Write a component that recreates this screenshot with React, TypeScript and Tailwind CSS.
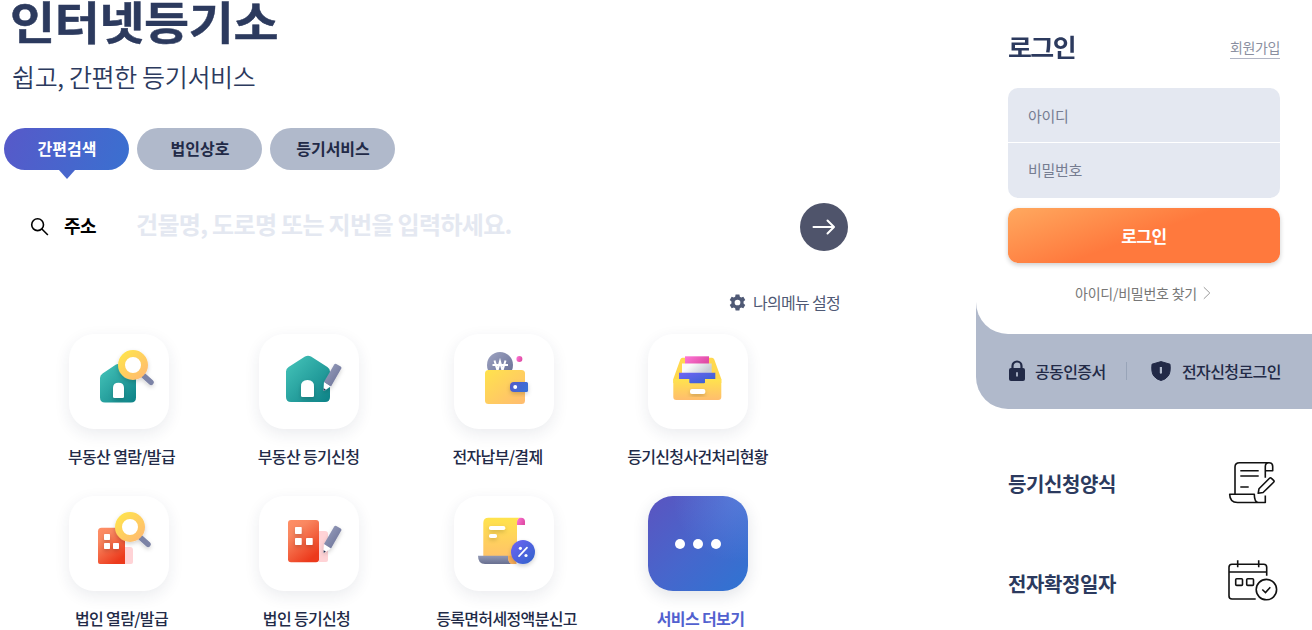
import React from 'react';

const Defs = () => (
  <svg className="absolute h-0 w-0" aria-hidden="true">
    <defs>
      <linearGradient id="teal" x1="0" y1="0" x2="1" y2="1"><stop offset="0" stopColor="#47c6bb" /><stop offset="1" stopColor="#0c8186" /></linearGradient>
      <linearGradient id="gold" x1="0" y1="0" x2="0.9" y2="1"><stop offset="0" stopColor="#ffe34d" /><stop offset="1" stopColor="#ffbd6e" /></linearGradient>
      <linearGradient id="goldV" x1="0" y1="0" x2="0" y2="1"><stop offset="0" stopColor="#ffe34d" /><stop offset="1" stopColor="#ffbd6e" /></linearGradient>
      <linearGradient id="slate" x1="0" y1="0" x2="1" y2="1"><stop offset="0" stopColor="#9ea4c2" /><stop offset="1" stopColor="#656c92" /></linearGradient>
      <linearGradient id="slateV" x1="0" y1="0" x2="0" y2="1"><stop offset="0" stopColor="#9299b5" /><stop offset="1" stopColor="#686f90" /></linearGradient>
      <linearGradient id="red" x1="0" y1="0" x2="0.6" y2="1"><stop offset="0" stopColor="#ff8f66" /><stop offset="0.3" stopColor="#f98760" /><stop offset="1" stopColor="#ec3a1c" /></linearGradient>
      <linearGradient id="blue" x1="0" y1="0" x2="1" y2="1"><stop offset="0" stopColor="#7065f5" /><stop offset="1" stopColor="#2f62c9" /></linearGradient>
      <linearGradient id="indigo" x1="0" y1="0" x2="1" y2="0.4"><stop offset="0" stopColor="#5658c8" /><stop offset="1" stopColor="#3a6fd6" /></linearGradient>
      <linearGradient id="pink" x1="0" y1="0" x2="1" y2="0.4"><stop offset="0" stopColor="#ff78d8" /><stop offset="1" stopColor="#e04ca5" /></linearGradient>
      <linearGradient id="paper" x1="0" y1="0" x2="1" y2="0.4"><stop offset="0.3" stopColor="#fafafa" /><stop offset="1" stopColor="#c9ced6" /></linearGradient>
      <filter id="soft" x="-50%" y="-50%" width="200%" height="200%"><feDropShadow dx="0" dy="2" stdDeviation="2" floodColor="#000" floodOpacity="0.18" /></filter>
    </defs>
  </svg>
);

const Art = ({ children }: { children: React.ReactNode }) => (
  <svg viewBox="0 0 100 95" className="block h-[95px] w-[100px]">{children}</svg>
);

const Magnifier = ({ x, y }: { x: number; y: number }) => (
  <g transform={`translate(${x} ${y})`} filter="url(#soft)">
    <path d="M11 11L18 17.3" stroke="#7c83a6" strokeWidth="5.500" strokeLinecap="round" />
    <circle r="11.5" fill="#fff" />
    <circle r="11.5" fill="none" stroke="url(#gold)" strokeWidth="7" />
  </g>
);

const Pencil = () => (
  <g filter="url(#soft)">
    <path d="M65 47.8l6.8 4.4-5.3 3.7-2 1z" fill="#fff" />
    <path d="M64.6 54.3l2.3 1.2-2.2 1.5z" fill="#242c4c" />
    <path d="M75.2 30.4q.9-1 2.1-.4l4.4 2.6q1.2.8.6 2L72 52.4l-7-4.4z" fill="url(#slate)" />
  </g>
);

const HouseSearch = () => (
  <Art>
    <path d="M31 44q0-3 2.6-4.6l13-8.6q2.4-1.6 4.8 0l13 8.6Q67 41 67 44v19.5q0 5-5 5H36q-5 0-5-5z" fill="url(#teal)" />
    <path d="M44 54q0-5.3 5.5-5.3T55 54v8.5q0 1.5-1.500 1.500h-8q-1.500 0-1.500-1.500z" fill="#fff" filter="url(#soft)" />
    <Magnifier x={64} y={31} />
  </Art>
);
const HousePencil = () => (
  <Art>
    <path d="M27 37.500q0-3 2.600-4.600L46 22.500q3-1.600 6 0l16.400 10.400Q71 34.500 71 37.500V63q0 5-5 5H32q-5 0-5-5z" fill="url(#teal)" />
    <path d="M42 52.500q0-6.500 6.500-6.500t6.500 6.500v9q0 1.500-1.500 1.500h-10q-1.500 0-1.500-1.500z" fill="#fff" filter="url(#soft)" />
    <Pencil />
  </Art>
);
const Wallet = () => (
  <Art>
    <circle cx="46" cy="31" r="13" fill="url(#slate)" />
    <path d="M40.500 26.500l3 10 2.500-9 2.500 9 3-10M38.500 31h15.500" fill="none" stroke="#fff" strokeWidth="2" />
    <rect x="31" y="36" width="40" height="34" rx="3.500" fill="url(#gold)" />
    <circle cx="65.400" cy="24.900" r="3" fill="url(#pink)" />
    <path d="M60 48h12.500q1.500 0 1.500 1.500v7q0 1.500-1.500 1.500H60q-4 0-4-4v-2q0-4 4-4z" fill="url(#indigo)" filter="url(#soft)" />
    <circle cx="61.200" cy="53" r="2" fill="#fff" />
  </Art>
);
const Drawer = () => (
  <Art>
    <path d="M34.500 23.700h29.500q1.600 0 2.300 1.800L73.300 45v4h-48v-4l7-19.500q.7-1.800 2.200-1.800z" fill="#ffd84f" />
    <path d="M37 22.300h24v8H37z" fill="url(#pink)" />
    <path d="M34 29.500h29.700V39H34z" fill="url(#paper)" />
    <path d="M31 38.700h36.300V51H31z" fill="url(#blue)" />
    <path d="M25.300 45h16v3.300q0 1 1 1H56q1 0 1-1V45h16.300v18q0 3-3 3h-42q-3 0-3-3z" fill="url(#goldV)" />
    <rect x="42" y="55" width="15.300" height="5" rx="2" fill="#fff" filter="url(#soft)" />
  </Art>
);
const OfficeSearch = () => (
  <Art>
    <path d="M56 51h5q3 0 3 3v12q0 2-2 2h-6z" fill="#ffd3d6" />
    <path d="M32.500 31.700H52q4 0 4 4V68H31q-2 0-2-2V35.200q0-3.500 3.500-3.500z" fill="url(#red)" />
    <g fill="#fff" filter="url(#soft)"><rect x="35" y="38" width="6" height="6" rx=".7" /><rect x="35" y="47" width="6" height="6" rx=".7" /><rect x="44" y="47" width="6" height="6" rx=".7" /></g>
    <Magnifier x={61} y={31} />
  </Art>
);
const OfficePencil = () => (
  <Art>
    <path d="M60 35h6q3 0 3 3v26q0 2-2 2h-7z" fill="#ffd3d6" />
    <rect x="29" y="24" width="31" height="42.200" rx="3" fill="url(#red)" />
    <g fill="#fff" filter="url(#soft)"><rect x="36" y="31" width="6.700" height="7" rx=".7" /><rect x="36" y="42" width="6.700" height="7" rx=".7" /><rect x="47" y="42" width="6.700" height="7" rx=".7" /></g>
    <Pencil />
  </Art>
);
const TaxScroll = () => (
  <Art>
    <path d="M63 29v-3.500q0-3.800 4-3.800t4 3.800V29z" fill="url(#pink)" />
    <path d="M34.500 21.700H67q-4 0-4 4.500V62q0 6-4 6t-5-6v-2H29.300V27q0-5.300 5.200-5.300z" fill="url(#goldV)" />
    <path d="M24 59.700h30q0 8.300 5 8.300H31q-7 0-7-8.300z" fill="url(#slateV)" />
    <path d="M54 59.700h8.500V68H58q-4 0-4-8.300z" fill="#f6ab58" />
    <g fill="#fff" filter="url(#soft)"><rect x="35" y="30" width="16.300" height="4" rx="1.800" /><rect x="35" y="38" width="8" height="4" rx="1.800" /></g>
    <circle cx="69" cy="56" r="12" fill="url(#blue)" filter="url(#soft)" />
    <path d="M65 60.200l8-8.500" stroke="#fff" strokeWidth="1.700" strokeLinecap="round" />
    <circle cx="66.400" cy="52.300" r="1.600" fill="#fff" /><circle cx="72" cy="59.500" r="1.600" fill="#fff" />
  </Art>
);
const MoreDots = () => (
  <Art><g fill="#fff"><circle cx="32" cy="48" r="5" /><circle cx="50" cy="48" r="5" /><circle cx="68" cy="48" r="5" /></g></Art>
);

const rows = [
  [
    { label: '부동산 열람/발급', icon: <HouseSearch />, col: 'w-[190px]', shift: 'pl-[5px]' },
    { label: '부동산 등기신청', icon: <HousePencil />, col: 'w-[190px]', shift: 'pr-px' },
    { label: '전자납부/결제', icon: <Wallet />, col: 'w-[200px]', shift: 'pr-[13px]' },
    { label: '등기신청사건처리현황', icon: <Drawer />, col: 'w-[188px]', shift: 'pr-px' },
  ],
  [
    { label: '법인 열람/발급', icon: <OfficeSearch />, col: 'w-[190px]', shift: 'pl-[5px]' },
    { label: '법인 등기신청', icon: <OfficePencil />, col: 'w-[190px]', shift: 'pr-[5px]' },
    { label: '등록면허세정액분신고', icon: <TaxScroll />, col: 'w-[200px]', shift: 'pl-[5px]' },
    { label: '서비스 더보기', icon: <MoreDots />, col: 'w-[188px]', shift: 'pl-[5px]', more: true },
  ],
];

const Gear = () => (
  <svg viewBox="0 0 16 16" className="h-[17px] w-[17px]" fill="#4f5975">
    <path fillRule="evenodd" d="M6.200.5h3.600l.4 2.100 1.300.8 2-.8 1.800 3.100-1.600 1.400v1.800l1.600 1.400-1.800 3.100-2-.8-1.300.8-.4 2.100H6.200l-.4-2.100-1.300-.8-2 .8L.7 10.300l1.600-1.400V7.100L.7 5.700l1.800-3.100 2 .8 1.300-.8zM8 5.300a2.700 2.700 0 1 0 0 5.400 2.700 2.700 0 0 0 0-5.400z" />
  </svg>
);

const ScrollLine = () => (
  <svg viewBox="0 0 56 50" className="h-[50px] w-14" fill="none" stroke="#111" strokeWidth="1.600" strokeLinejoin="round">
    <path d="M10 36V9q0-4.300 4.500-4.300H44M40.300 19.700V8.500q0-3.800 3.700-3.800t3.700 3.800v4.200h-7.400M15.300 12.700h18.400M15.300 18h18.400M15.300 29h8.400" />
    <path d="M4.700 36.300h24.600q0 8.200 4.200 8.200H12.500q-7.800 0-7.800-8.200zM33 44.500h7.300v-7" />
    <path d="M33.200 35.300l.8-4.600 10.500-10.400q1-1 2 0l2.100 2q1 1 0 2L38.100 34.500z" />
  </svg>
);
const CalendarLine = () => (
  <svg viewBox="0 0 56 50" className="h-[50px] w-14" fill="none" stroke="#111" strokeWidth="1.600">
    <path d="M30.700 43H7q-3 0-3-3V11.300q0-3 3-3h31.700q3 0 3 3v8.400M4 16h37.700M12.700 4.300v7M33.700 4.300v7" />
    <rect x="10.700" y="22.800" width="6.800" height="6.600" rx="1" /><rect x="21.700" y="22.800" width="6.800" height="6.600" rx="1" />
    <circle cx="41.400" cy="33.600" r="10.200" /><path d="M37.300 33.500l3.200 3 4.800-5.200" />
  </svg>
);

export default function App() {
  return (
    <div className="flex h-[630px] w-[1312px] overflow-hidden bg-white font-['Noto_Sans_CJK_KR',sans-serif] text-[#222a47]">
      <Defs />
      <main className="flex w-[976px] flex-col">
        <h1 className="ml-[10px] h-[60px] origin-top scale-y-[0.92] whitespace-nowrap text-[49px] font-bold leading-[46px] tracking-[-0.400px] text-[#2c3a5e] [-webkit-text-stroke:0.5px_#2c3a5e]">인터넷등기소</h1>
        <p className="ml-3 h-8 whitespace-nowrap text-[25px] font-[350] leading-8 tracking-[-0.350px] text-[#2c3a5e]">쉽고, 간편한 등기서비스</p>
        <div className="ml-1 mt-9 flex gap-2">
          <div className="flex flex-col items-center">
            <button className="h-[42px] w-[125px] rounded-full bg-[linear-gradient(110deg,#5759c9,#3a70d0)] pb-0.5 pl-px text-base font-bold leading-10 text-white">간편검색</button>
            <svg viewBox="0 0 16 9" className="h-[9px] w-4"><path d="M0 0h16L8 9z" fill="#4866cc" /></svg>
          </div>
          <button className="h-[42px] w-[125px] rounded-full bg-[#b0b9cb] pb-0.5 pl-px text-base font-bold leading-10">법인상호</button>
          <button className="h-[42px] w-[125px] rounded-full bg-[#b0b9cb] pb-0.5 pl-px text-base font-bold leading-10">등기서비스</button>
        </div>
        <div className="ml-[30px] mt-6 flex h-12 w-[818px] items-center">
          <svg viewBox="0 0 20 20" className="h-5 w-5" fill="none" stroke="#000" strokeWidth="1.600"><circle cx="7.600" cy="7.700" r="5.900" /><path d="M11.900 12l6 6" /></svg>
          <span className="ml-[14px] w-[72px] whitespace-nowrap pb-1 text-lg font-bold leading-6 tracking-[-0.500px] text-black">주소</span>
          <span className="grow whitespace-nowrap pb-[7px] text-2xl font-bold leading-8 tracking-[-0.680px] text-[#e4e8f1]">건물명, 도로명 또는 지번을 입력하세요.</span>
          <button className="flex h-12 w-12 items-center justify-center rounded-full bg-[#4f546b]">
            <svg viewBox="0 0 24 16" className="h-4 w-6" fill="none" stroke="#fff" strokeWidth="2"><path d="M1.500 8h20M15.500 1.500L22 8l-6.500 6.500" strokeLinecap="round" strokeLinejoin="round" /></svg>
          </button>
        </div>
        <div className="mt-[39px] flex h-6 w-[840px] items-center justify-end gap-[7px] text-base leading-6 tracking-[-0.700px] text-[#4f5975]">
          <Gear /><span className="whitespace-nowrap">나의메뉴 설정</span>
        </div>
        <div className="ml-6 mt-5 flex flex-col gap-7">
          {rows.map((row, r) => (
            <div key={r} className="flex">
              {row.map((it) => (
                <div key={it.label} className={`flex flex-col items-center ${it.col}`}>
                  <div className={it.more ? 'rounded-[25px] bg-[radial-gradient(circle_at_90%_0%,rgba(110,160,240,0.35),transparent_50%),linear-gradient(135deg,#5b54c0,#4766cc_50%,#2f74d2)] shadow-[0_5px_16px_rgba(30,45,80,0.13)]' : 'rounded-[25px] bg-white shadow-[0_5px_16px_rgba(30,45,80,0.09)]'}>
                    {it.icon}
                  </div>
                  <span className={`mt-[15px] whitespace-nowrap text-base leading-6 tracking-[-0.650px] ${it.shift} ${it.more ? 'font-bold text-[#5261cf]' : 'font-medium'}`}>{it.label}</span>
                </div>
              ))}
            </div>
          ))}
        </div>
      </main>
      <aside className="flex w-[336px] flex-col">
        <div className="h-[409px] rounded-bl-[32px] bg-[#b0b9cb]">
          <div className="flex h-[334px] flex-col rounded-bl-[32px] bg-white pl-8 pr-8 pt-[28px]">
            <div className="flex h-10 items-center justify-between">
              <h2 className="scale-y-[0.94] pb-0.5 text-[26px] font-bold leading-[38px] tracking-[-1.600px] text-[#2c3a5e]">로그인</h2>
              <a className="h-[21px] border-b border-[#b1b5c4] text-sm leading-[18px] tracking-[-0.400px] text-[#8a8fa0]">회원가입</a>
            </div>
            <div className="mt-5 flex h-[110px] shrink-0 flex-col overflow-hidden rounded-[10px] bg-[#e4e8f1] text-[15px] tracking-[-0.300px] text-[#767d91]">
              <div className="h-[55px] border-b border-white pl-5 leading-[55px]">아이디</div>
              <div className="h-[55px] pl-5 leading-[54px]">비밀번호</div>
            </div>
            <button className="mt-2.5 h-[55px] shrink-0 rounded-[10px] bg-[linear-gradient(160deg,#ffa95f_0%,#ff793d_50%)] text-[17px] font-bold leading-[55px] tracking-[-0.400px] text-white shadow-[0_2px_5px_rgba(0,0,0,0.2)]">로그인</button>
            <div className="mt-[20px] flex h-5 items-center justify-center gap-[6px] pr-0.5 text-sm leading-5 tracking-[-0.250px] text-[#777]">
              아이디/비밀번호 찾기
              <svg viewBox="0 0 8 14" className="h-[14px] w-2" fill="none" stroke="#999"><path d="M.8 1.200L6.800 7l-6 5.800" /></svg>
            </div>
          </div>
          <div className="flex h-[75px] items-center pb-0.5 pl-8 text-base font-medium tracking-[-0.600px]">
            <svg viewBox="0 0 18 22" className="mt-px h-[22px] w-[18px]"><path d="M4.500 10V6a4.500 4.500 0 0 1 9 0v4" fill="none" stroke="#222a47" strokeWidth="2.200" /><rect x="1" y="8" width="16" height="13" rx="2" fill="#222a47" /><path d="M8.100 12.200h1.800v4.400H8.100z" fill="#b0b9cb" /></svg>
            <span className="ml-[9px] w-[91px] whitespace-nowrap">공동인증서</span>
            <span className="h-[18px] w-px bg-[#98a4b8]" />
            <svg viewBox="0 0 20 20" className="ml-6 h-5 w-5"><path d="M10 .6l9 2.600q1 8.300-2 12T10 19.500Q6 18.800 3 15.200T1 3.200z" fill="#222a47" stroke="#222a47" strokeLinejoin="round" /><path d="M8.800 6h2.200v6l-1.100 1L8.800 12z" fill="#b0b9cb" /></svg>
            <span className="ml-[11px] whitespace-nowrap">전자신청로그인</span>
          </div>
        </div>
        <div className="mt-[49px] flex h-[50px] items-center justify-between pl-8 pr-[31px] text-xl font-bold tracking-[-0.400px] text-[#2c3a5e]"><span className="pt-0.5">등기신청양식</span><ScrollLine /></div>
        <div className="mt-12 flex h-[50px] items-center justify-between pl-8 pr-[31px] text-xl font-bold tracking-[-0.400px] text-[#2c3a5e]"><span className="pt-[6px]">전자확정일자</span><CalendarLine /></div>
      </aside>
    </div>
  );
}
